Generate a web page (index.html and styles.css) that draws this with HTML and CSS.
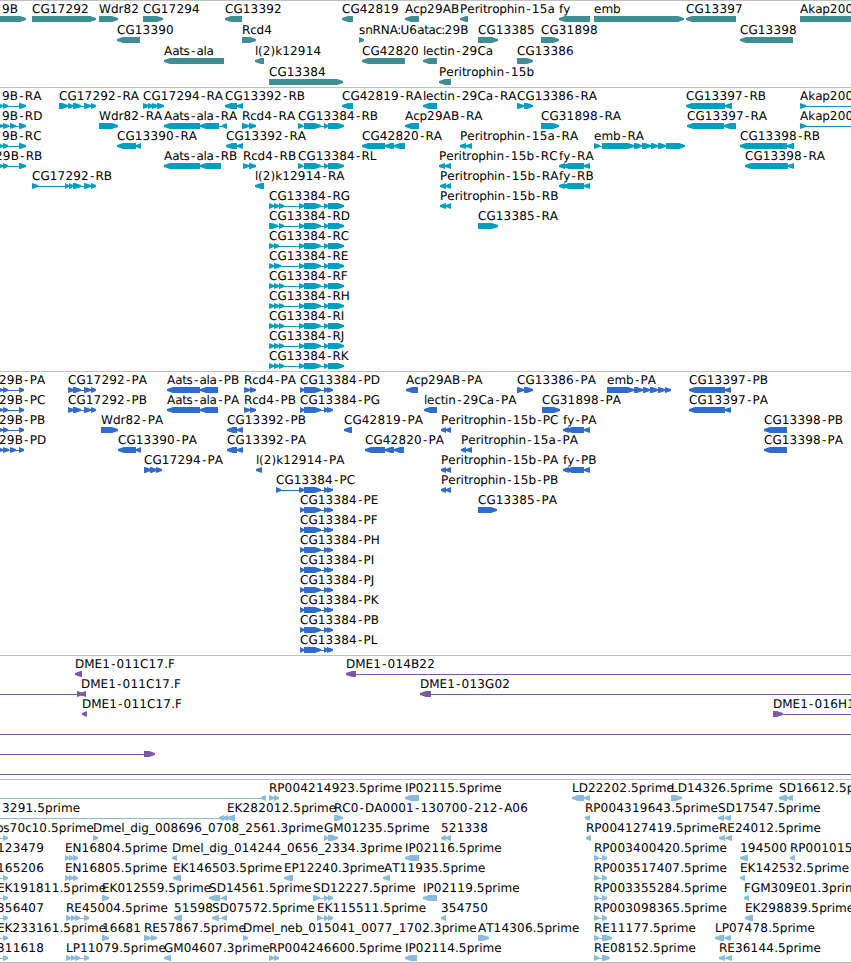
FILE: index.html
```
<!DOCTYPE html>
<html lang="en">
<head>
    <meta charset="UTF-8">
    <meta name="viewport" content="width=device-width, initial-scale=1.0">
    <title>Genome Browser</title>
    <link rel="stylesheet" href="styles.css">
</head>
<body>
    <main class="browser">
        <section class="track genes"><svg id="genes" class="lane"></svg></section>
        <section class="track transcripts"><svg id="transcripts" class="lane"></svg></section>
        <section class="track proteins"><svg id="proteins" class="lane"></svg></section>
        <section class="track clones"><svg id="clones" class="lane"></svg></section>
        <section class="track ests"><svg id="ests" class="lane"></svg></section>
    </main>
    <script src="tracks.js"></script>
</body>
</html>
```
FILE: styles.css
```
:root {
    --gene: #3f8e94;
    --transcript: #009fbf;
    --protein: #306ccb;
    --clone: #7a5aa8;
    --est: #88bbdc;
    --divider: #c0c0c0;
}

* {
    margin: 0;
    padding: 0;
    box-sizing: border-box;
}

body {
    background-color: #fff;
    color: #000;
    font-family: 'DejaVu Sans', sans-serif;
    font-size: 12px;
    overflow: hidden;
}

.browser {
    display: flex;
    flex-direction: column;
    width: 851px;
}

.track {
    border-top: 1px solid var(--divider);
    overflow: hidden;
}

.lane {
    display: block;
    width: 100%;
    height: 100%;
}

.lane text {
    fill: #000;
    white-space: pre;
    font-kerning: none;
    text-rendering: geometricPrecision;
}

.lane line {
    stroke: currentColor;
    stroke-width: 1;
    shape-rendering: crispEdges;
}

.lane polygon {
    fill: currentColor;
}

.genes {
    height: 87px;
    color: var(--gene);
}

.transcripts {
    height: 284px;
    color: var(--transcript);
}

.proteins {
    height: 284px;
    color: var(--protein);
}

.clones {
    height: 124px;
    color: var(--clone);
}

.ests {
    height: 184px;
    color: var(--est);
    border-bottom: 1px solid var(--divider);
}
```
FILE: tracks.js
```
// Each feature is "row | label | label x | strand | exons | line from-to (optional)"
const utr = '304:321 324:328 328:344';
const cds = '304:321 324:328 327:333';
const ra = '68:74 73:81 84:91 91:96';

const genes = `
0|9B|2|+|-10:26
0|CG17292|32|+|32:96
0|Wdr82|99|+|99:118
0|CG17294|143|+|143:163
0|CG13392|225|-|225:242
0|CG42819|342|-|342:353
0|Acp29AB|405|-|405:419
0|Peritrophin-15a|459.5|-|460:468
0|fy|559|-|559:590
0|emb|594|+|594:684
0|CG13397|686|-|686:736
0|Akap200|800|+|800:900
1|CG13390|117|-|117:140
1|Rcd4|241.5|+|242:256
1|snRNA:U6atac:29B|359|+|359:364
1|CG13385|478|+|478:498
1|CG31898|541|+|541:559
1|CG13398|740|-|740:793
2|Aats-ala|164|-|164:224
2|l(2)k12914|254.5|-|255:264
2|CG42820|362|-|362:405
2|lectin-29Ca|422.5|-|423:437
2|CG13386|517|+|517:533
3|CG13384|269|+|269:343
3|Peritrophin-15b|438.5|-|439:451`;

const transcripts = `
0|9B-RA|2|+|-3:3 3:8 19:26
0|CG17292-RA|59|+|59:68 68:73 73:81 84:91 91:96
0|CG17294-RA|143|+|143:149 148:153 152:158 157:164
0|CG13392-RB|225|-|225:237 237:243
0|CG42819-RA|342|-|342:353
0|lectin-29Ca-RA|422.5|-|423:437
0|CG13386-RA|517|+|517:524 524:533
0|CG13397-RB|686|-|686:725 725:732
0|Akap200-RA|800|+|800:806|800:860
1|9B-RD|2|+|-3:3 3:9 10:16 19:26
1|Wdr82-RA|99|+|99:118
1|Aats-ala-RA|164|-|164:200 200:219 222:227
1|Rcd4-RA|241.5|+|242:249 249:256
1|CG13384-RB|298|+|298:303 ${utr}
1|Acp29AB-RA|405|-|405:419
1|CG31898-RA|541|+|541:559
1|CG13397-RA|687|-|687:724 724:736
1|Akap200-RB|800|+|800:806|800:860
2|9B-RC|2|+|-3:3 3:8 19:26
2|CG13390-RA|117|-|117:136 136:141
2|CG13392-RA|226|-|226:237 237:243
2|CG42820-RA|362|-|362:385 385:394 394:405
2|Peritrophin-15a-RA|459.5|-|460:466 466:472
2|emb-RA|594|+|594:600 602:634 634:642 642:651 651:658 658:666 666:685
2|CG13398-RB|740|-|740:787 787:794
3|29B-RB|-5.6|+|-3:3 3:8 19:26
3|Aats-ala-RB|164|-|164:200 200:221
3|Rcd4-RB|242.5|+|243:249 249:256
3|CG13384-RL|298|+|298:303 ${utr}
3|Peritrophin-15b-RC|438.5|-|439:445 445:451
3|fy-RA|559|-|559:565 563:584 584:590
3|CG13398-RA|745|-|745:788 788:794
4|CG17292-RB|32|+|32:38 65:69 69:73 73:81 84:91 91:96
4|l(2)k12914-RA|254.5|-|255:264
4|Peritrophin-15b-RA|439.5|-|440:446 446:451
4|fy-RB|559|-|559:565 563:584 584:590
5|CG13384-RG|269|+|269:274 274:279 279:284 299:304 ${utr}
5|Peritrophin-15b-RB|439.5|-|440:446 446:451
6|CG13384-RD|269|+|269:278 279:284 299:304 ${utr}
6|CG13385-RA|478|+|478:498
7|CG13384-RC|269|+|269:274 274:279 299:304 ${utr}
8|CG13384-RE|269|+|269:274 274:281 299:304 ${utr}
9|CG13384-RF|269|+|269:274 274:279 279:284 299:304 ${utr}
10|CG13384-RH|269|+|269:274 274:279 279:284 299:304 ${utr}
11|CG13384-RI|269|+|269:274 274:279 279:284 299:304 ${utr}
12|CG13384-RJ|269|+|269:274 274:279 279:284 299:304 ${utr}
13|CG13384-RK|269|+|269:274 274:279 279:284 299:304 ${utr}`;

const proteins = `
0|29B-PA|-1.5|+|-3:3 3:8 19:24
0|CG17292-PA|68|+|${ra}
0|Aats-ala-PB|167|-|167:200 200:218
0|Rcd4-PA|243.5|+|244:250 250:256
0|CG13384-PD|300|+|300:304 ${cds}
0|Acp29AB-PA|406|-|406:418
0|CG13386-PA|517|+|517:524 524:533
0|emb-PA|607|+|607:634 634:643 643:650 650:658 658:665 665:671
0|CG13397-PB|689|-|689:725 725:731
1|29B-PC|-1.5|+|-3:3 3:8 19:24
1|CG17292-PB|68|+|${ra}
1|Aats-ala-PA|167|-|167:200 200:218
1|Rcd4-PB|243.5|+|244:250 250:256
1|CG13384-PG|300|+|300:304 ${cds}
1|lectin-29Ca-PA|423.5|-|424:437
1|CG31898-PA|542|+|542:560
1|CG13397-PA|689|-|689:725 725:731
2|29B-PB|-1.5|+|-3:3 3:8 19:24
2|Wdr82-PA|101|+|101:118
2|CG13392-PB|227|-|227:237 237:243
2|CG42819-PA|344|-|344:352
2|Peritrophin-15b-PC|440.5|-|441:446 446:451
2|fy-PA|562.5|-|563:569 566:584 584:590
2|CG13398-PB|764|-|764:787
3|29B-PD|-1.5|+|-3:3 3:9 10:16 19:24
3|CG13390-PA|118|-|118:136 136:141
3|CG13392-PA|227|-|227:237 237:243
3|CG42820-PA|365|-|365:385 385:394 394:404
3|Peritrophin-15a-PA|460.5|-|461:466 466:472
3|CG13398-PA|764|-|764:787
4|CG17294-PA|144|+|144:151 150:157 156:162
4|l(2)k12914-PA|255.5|-|256:262
4|Peritrophin-15b-PA|440.5|-|441:446 446:451
4|fy-PB|562.5|-|563:569 566:584 584:590
5|CG13384-PC|276|+|276:281 299:304 ${cds}
5|Peritrophin-15b-PB|440.5|-|441:446 446:451
6|CG13384-PE|300|+|300:304 ${cds}
6|CG13385-PA|478|+|478:497
7|CG13384-PF|300|+|300:304 ${cds}
8|CG13384-PH|300|+|300:304 ${cds}
9|CG13384-PI|300|+|300:304 ${cds}
10|CG13384-PJ|300|+|300:304 ${cds}
11|CG13384-PK|300|+|300:304 ${cds}
12|CG13384-PB|300|+|300:304 ${cds}
13|CG13384-PL|300|+|300:304 ${cds}`;

const clones = `
0|DME1-011C17.F|74.5|-|75:82
0|DME1-014B22|345.5|-|346:356|350:860
1||0|+|77:83|-5:80
1|DME1-011C17.F|80.5|-|80:86
1|DME1-013G02|419.5|-|420:431|425:860
2|DME1-011C17.F|81.5|-|82:87
2|DME1-016H10|772.5|+|773:783|773:860
3||0|+||-5:860
4||0|+|144:155|-5:150
5||0|+||-5:860`;

const ests = `
0||0|-|261:266|-5:266
0|RP004214923.5prime|268.5|+|269:274 274:279
0|IP02115.5prime|404.5|-|405:419
0|LD22202.5prime|571.5|-|572:584 584:590
0|LD14326.5prime|670.5|+|671:682
0|SD16612.5prime|778.5|-|779:787 787:793
1|3291.5prime|2|-|219:224 223:228|-5:230
1|EK282012.5prime|226.5|-|227:235
1|RC0-DA0001-130700-212-A06|333.5|+|334:343
1|RP004319643.5prime|584.5|-|585:590
1|SD17547.5prime|717.5|-|718:724 725:731
2|bs70c10.5prime|-4.7|+|3:8|-5:5
2|Dmel_dig_008696_0708_2561.3prime|92.5|+|93:98
2|GM01235.5prime|324|+|324:328 328:338
2|521338|441|-|441:446 446:451
2|RP004127419.5prime|585.5|-|586:591
2|RE24012.5prime|718.5|-|719:725 726:732
3|123479|-3.6|+|-5:0
3|EN16804.5prime|64.5|+|65:69 69:73 73:78
3|Dmel_dig_014244_0656_2334.3prime|171.5|-|172:177
3|IP02116.5prime|404.5|-|405:419
3|RP003400420.5prime|593.5|+|594:599 602:607
3|194500|740|-|740:748
3|RP001015130.5prime|789.5|-|790:795
4|165206|-3.6|+|3:8|-5:5
4|EN16805.5prime|64.5|+|65:69 69:73 73:78
4|EK146503.5prime|172.5|-|173:181
4|EP12240.3prime|283.5|-|284:293
4|AT11935.5prime|383.5|-|383:390
4|RP003517407.5prime|593.5|+|594:599 602:607
4|EK142532.5prime|739.5|-|740:745
5|EK191811.5prime|-3.2|+|3:8|-5:5
5|EK012559.5prime|101.5|+|102:109
5|SD14561.5prime|208.5|-|209:220 222:227
5|SD12227.5prime|312.5|+|313:320 324:328 328:333
5|IP02119.5prime|422.5|-|423:437
5|RP003355284.5prime|593.5|+|594:599 602:607
5|FGM309E01.3prime|743.5|-|744:749
6|356407|-3.8|+|3:8|-5:5
6|RE45004.5prime|65.5|+|66:71 71:75 75:80 84:89
6|51598|174|-|174:182
6|SD07572.5prime|211.5|-|212:219 222:227
6|EK115511.5prime|316.5|+|317:322 324:328 328:333
6|354750|441|-|441:446
6|RP003098365.5prime|593.5|+|594:599 602:607
6|EK298839.5prime|744.5|-|745:753
7|EK233161.5prime|-3.2|+|3:8|-5:5
7|16681|102|+|102:109
7|RE57867.5prime|143.5|+|144:151 151:157
7|Dmel_neb_015041_0077_1702.3prime|242.5|+|243:248
7|AT14306.5prime|478|+|478:489
7|RE11177.5prime|593.5|+|594:599 602:612
7|LP07478.5prime|714.5|-|715:724 725:731
8|311618|-3.6|+|3:8|-5:5
8|LP11079.5prime|65.5|+|66:71 71:75 75:80 84:89
8|GM04607.3prime|164|-|164:171
8|RP004246600.5prime|268.5|+|269:274 274:279
8|IP02114.5prime|404.5|-|405:417
8|RE08152.5prime|593.5|+|594:599 602:610
8|RE36144.5prime|718.5|-|719:725 726:732`;

const SVG = 'http://www.w3.org/2000/svg';
const BAR = 6;
const HEAD = 6;

function add(svg, name, attrs) {
    const el = document.createElementNS(SVG, name);
    for (const key in attrs) {
        el.setAttribute(key, attrs[key]);
    }
    svg.appendChild(el);
    return el;
}

// space between two neighbouring characters: airy hyphens and digits, tight lowercase
function gap(prev, c) {
    if (prev === '-' || c === '-') return 1.2;
    if (prev === ':' || c === ':') return -0.8;
    if (/\d/.test(prev)) return 0.2;
    if (/[tlohnabc]/.test(prev)) return -0.35;
    return 0;
}

// bar with a pointed end on the strand side
function arrow(a, b, y, strand) {
    const head = Math.min(HEAD, b - a);
    const m = y + BAR / 2;
    const e = y + BAR;
    if (strand === '+') {
        return `${a},${y} ${b - head},${y} ${b},${m - 1} ${b},${m + 1} ${b - head},${e} ${a},${e}`;
    }
    return `${b},${y} ${a + head},${y} ${a},${m - 1} ${a},${m + 1} ${a + head},${e} ${b},${e}`;
}

function drawTrack(id, data, pitch) {
    const svg = document.getElementById(id);
    data.trim().split('\n').forEach(function (entry) {
        const [row, label, x, strand, exonList, span] = entry.split('|');
        const top = 15 + row * pitch;
        const exons = exonList ? exonList.split(' ').map(e => e.split(':').map(Number)) : [];

        let line = null;
        if (span) {
            line = span.split(':').map(Number);
        } else if (exons.length > 1) {
            line = [exons[0][0], exons[exons.length - 1][1] - 1];
        }
        if (line) {
            add(svg, 'line', { x1: line[0], x2: line[1], y1: top + 3.5, y2: top + 3.5 });
        }
        exons.forEach(e => add(svg, 'polygon', { points: arrow(e[0], e[1], top, strand) }));

        if (label) {
            const dx = [...label].map((c, i) => i ? gap(label[i - 1], c) : 0);
            // labels start on a whole pixel
            add(svg, 'text', { x: Math.ceil(x), y: top - 3, dx: dx.join(' ') }).textContent = label;
        }
    });
}

drawTrack('genes', genes, 21);
drawTrack('transcripts', transcripts, 20);
drawTrack('proteins', proteins, 20);
drawTrack('clones', clones, 20);
drawTrack('ests', ests, 20);
```
